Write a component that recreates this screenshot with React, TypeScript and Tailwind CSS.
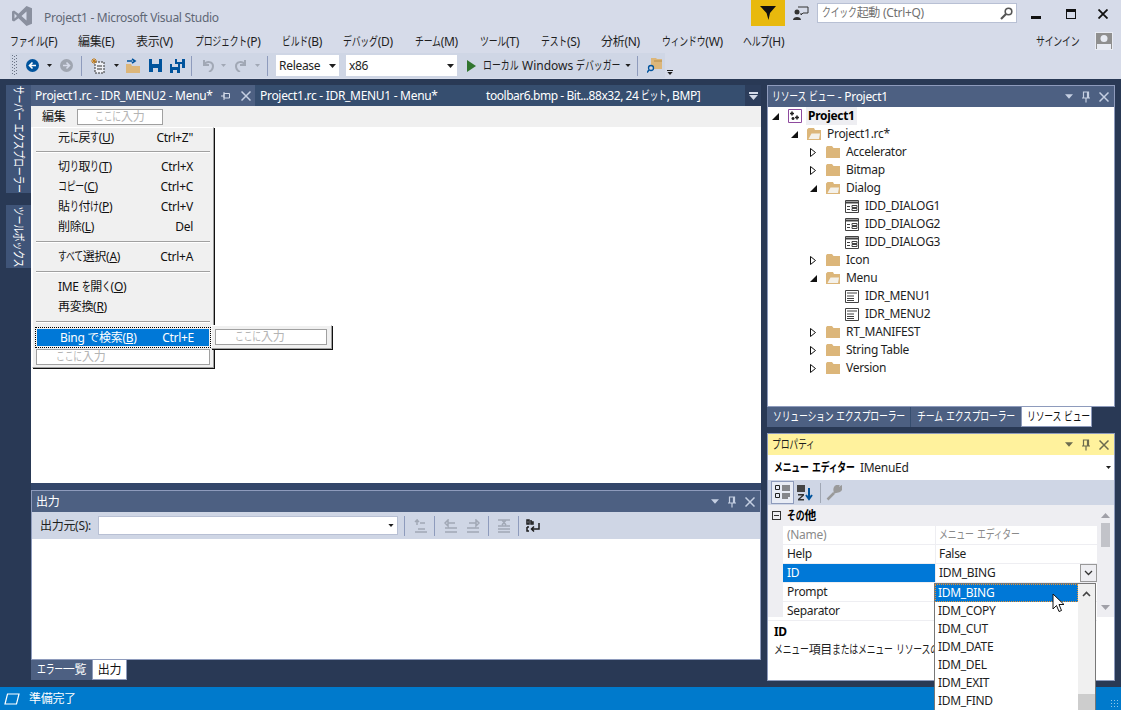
import React from "react";

const FONT = "font-['Noto_Sans','Noto_Sans_CJK_JP',sans-serif]";

function J({ t }: { t: string }) {
  const parts = t.split(/([\u3040-\u30ff]+)/);
  return (
    <>
      {parts.map((p, i) =>
        /^[\u3040-\u30ff]+$/.test(p) ? (
          <span
            key={i}
            className="inline-block origin-left scale-x-[0.74]"
            style={{ marginRight: -3.04 * p.length }}
          >
            {p}
          </span>
        ) : p === " " ? (
          <span key={i} className="inline-block w-[3px]">
            {" "}
          </span>
        ) : (
          <React.Fragment key={i}>{p}</React.Fragment>
        )
      )}
    </>
  );
}

function Arrow({ c = "#1e1e1e", w = 7, h = 4 }: { c?: string; w?: number; h?: number }) {
  return (
    <svg width={w} height={h} viewBox="0 0 7 4" className="shrink-0">
      <path d="M0 0H7L3.5 4Z" fill={c} />
    </svg>
  );
}

function Pin({ c }: { c: string }) {
  return (
    <svg width="10" height="12" viewBox="0 0 10 12" className="shrink-0">
      <path d="M2.5 1H7.5V7H2.5Z M1 7H9 M5 7V11.5 M6.5 1V7" fill="none" stroke={c} strokeWidth="1.2" />
    </svg>
  );
}

function X({ c, s = 10, w = 1.5 }: { c: string; s?: number; w?: number }) {
  return (
    <svg width={s} height={s} viewBox="0 0 10 10" className="shrink-0">
      <path d="M0.5 0.5L9.5 9.5M9.5 0.5L0.5 9.5" stroke={c} strokeWidth={w} />
    </svg>
  );
}

function Sep({ c = "#8e9bbc", h = 20 }: { c?: string; h?: number }) {
  return <div className="w-px shrink-0" style={{ height: h, backgroundColor: c }} />;
}

function ToolTitle({ title, active, icon }: { title: string; active?: boolean; icon?: string }) {
  const c = icon ?? "#c5cfe2";
  return (
    <div
      className={`flex h-[21px] shrink-0 items-center pl-[4px] pr-[5px] ${
        active ? "bg-[#fff29d] text-[#1e1e1e]" : "bg-[#4d6082] text-white"
      }`}
    >
      <span className="flex-1 truncate">
        <J t={title} />
      </span>
      <div className="flex items-center gap-[8px]">
        <Arrow c={c} w={8} h={5} />
        <Pin c={c} />
        <X c={c} />
      </div>
    </div>
  );
}

function TitleBar() {
  return (
    <div className="flex h-[30px] shrink-0 items-start">
      <svg width="20" height="20" viewBox="0 0 20 20" className="ml-[12px] mt-[6px] shrink-0">
        <path
          fillRule="evenodd"
          d="M14.5 0L20 2.2V17.8L14.5 20L6.5 12.2L2 15.5L0 14.5V5.5L2 4.5L6.5 7.8ZM14.5 5.5L9.5 10L14.5 14.5ZM2.5 7.5V12.5L5 10Z"
          fill="#8a909f"
        />
      </svg>
      <div className="ml-[12px] mt-[9px] text-[#5f6775] leading-[18px]">Project1 - Microsoft Visual Studio</div>
      <div className="flex-1" />
      <div className="flex h-[26px] w-[34px] items-center justify-center bg-[#e8b90d]">
        <svg width="16" height="14" viewBox="0 0 16 14">
          <path d="M0 0H16L10 7L8.5 14L6.5 7Z" fill="#111" />
        </svg>
      </div>
      <svg width="16" height="14" viewBox="0 0 16 14" className="ml-[8px] mt-[6px] shrink-0">
        <circle cx="4" cy="6" r="2.5" fill="#333" />
        <path d="M0 14C0 10 8 10 8 14Z" fill="#333" />
        <path d="M5 1H15V7H10L8 9V7" fill="none" stroke="#333" />
      </svg>
      <div className="ml-[8px] mt-[3px] flex h-[20px] w-[200px] items-center justify-between border border-[#b8c0d4] bg-white pl-[4px] pr-[3px] text-[#717171]">
        <span>
          <J t="クイック起動 (Ctrl+Q)" />
        </span>
        <svg width="13" height="13" viewBox="0 0 13 13">
          <circle cx="8.5" cy="4.5" r="3.3" fill="none" stroke="#555" strokeWidth="1.6" />
          <path d="M6 7L1 12" stroke="#555" strokeWidth="2.2" />
        </svg>
      </div>
      <div className="ml-[14px] mt-[16px] h-[2px] w-[10px] bg-[#111] shadow-[0_1px_0_#111]" />
      <div className="ml-[25px] mt-[9px] h-[10px] w-[10px] border border-t-[3px] border-[#111]" />
      <div className="ml-[22px] mt-[9px]">
        <X c="#111" s={10} w={1.8} />
      </div>
      <div className="w-[13px]" />
    </div>
  );
}

const MENUS: [string, number][] = [
  ["ファイル(F)", 68],
  ["編集(E)", 58],
  ["表示(V)", 59],
  ["プロジェクト(P)", 87],
  ["ビルド(B)", 61],
  ["デバッグ(D)", 72],
  ["チーム(M)", 65],
  ["ツール(T)", 61],
  ["テスト(S)", 60],
  ["分析(N)", 61],
  ["ウィンドウ(W)", 81],
  ["ヘルプ(H)", 293],
];

function MenuBar() {
  return (
    <div className="flex h-[22px] shrink-0 items-center pl-[10px] text-[#1e1e1e]">
      {MENUS.map(([m, w]) => (
        <div key={m} className="shrink-0 whitespace-nowrap pt-[1px]" style={{ width: w }}>
          <J t={m} />
        </div>
      ))}
      <div className="w-[59px] shrink-0 whitespace-nowrap pt-[1px]">
        <J t="サインイン" />
      </div>
      <div className="flex h-[18px] w-[18px] items-end justify-center border border-[#e8ebf3] bg-[#8f8f8f]">
        <svg width="14" height="15" viewBox="0 0 14 15">
          <circle cx="7" cy="4.5" r="3.5" fill="#e8ebf3" />
          <path d="M0 15V10H14V15Z" fill="#e8ebf3" />
        </svg>
      </div>
    </div>
  );
}

function Combo({ text, w }: { text: string; w: number }) {
  return (
    <div
      className="flex h-[21px] shrink-0 items-center justify-between bg-white pl-[3px] pr-[3px] text-[#1e1e1e]"
      style={{ width: w }}
    >
      <span>{text}</span>
      <Arrow />
    </div>
  );
}

function Grip() {
  const dots: React.ReactNode[] = [];
  for (let y = 0; y < 7; y++) {
    dots.push(<rect key={`a${y}`} x="0" y={y * 3} width="1" height="1" fill="#6a7486" />);
    dots.push(<rect key={`b${y}`} x="2" y={y * 3 + 1} width="1" height="1" fill="#6a7486" />);
    dots.push(<rect key={`c${y}`} x="4" y={y * 3} width="1" height="1" fill="#6a7486" />);
  }
  return (
    <svg width="5" height="21" viewBox="0 0 5 21" className="ml-[2px] shrink-0">
      {dots}
    </svg>
  );
}

function ToolBar() {
  return (
    <div className="flex h-[27px] shrink-0 items-center pl-[10px]">
      <div className="flex h-[25px] w-[655px] shrink-0 items-center bg-[#cfd6e5]">
        <Grip />
        <svg width="13" height="13" viewBox="0 0 13 13" className="ml-[9px] shrink-0">
          <circle cx="6.5" cy="6.5" r="6.5" fill="#00539c" />
          <path d="M10 6.5H4M6.5 3.5L3.5 6.5L6.5 9.5" stroke="#fff" strokeWidth="1.6" fill="none" />
        </svg>
        <div className="ml-[8px]">
          <Arrow w={5} h={3} />
        </div>
        <svg width="13" height="13" viewBox="0 0 13 13" className="ml-[8px] shrink-0">
          <circle cx="6.5" cy="6.5" r="6.5" fill="#9fa5b0" />
          <path d="M3 6.5H9M6.5 3.5L9.5 6.5L6.5 9.5" stroke="#d6dbe9" strokeWidth="1.6" fill="none" />
        </svg>
        <div className="ml-[8px]">
          <Sep h={20} />
        </div>
        <svg width="15" height="16" viewBox="0 0 15 16" className="ml-[9px] shrink-0">
          <path d="M4 4H13V15H4Z" fill="#eef0f6" stroke="#333" strokeDasharray="2 1" />
          <path d="M3 0V6M0 3H6M1 1L5 5M5 1L1 5" stroke="#c27d1a" strokeWidth="1" />
          <path d="M6 8H11M6 11H11" stroke="#333" />
        </svg>
        <div className="ml-[8px]">
          <Arrow w={5} h={3} />
        </div>
        <svg width="15" height="15" viewBox="0 0 15 15" className="ml-[7px] shrink-0">
          <path d="M0 6H5L6 8H14V15H0Z" fill="#dcb67a" />
          <path d="M1 3H6M6 1L9 3L6 5" stroke="#00539c" strokeWidth="1.6" fill="none" />
        </svg>
        <svg width="13" height="13" viewBox="0 0 13 13" className="ml-[8px] shrink-0">
          <path fillRule="evenodd" d="M0 0H13V13H0ZM3 0V5H10V0ZM4 9V13H9V9Z" fill="#00539c" />
        </svg>
        <svg width="15" height="14" viewBox="0 0 15 14" className="ml-[8px] shrink-0">
          <path fillRule="evenodd" d="M5 0H15V9H12V5H5ZM7 0V3H12V0Z" fill="#00539c" />
          <path fillRule="evenodd" d="M0 5H10V14H0ZM2 5V8H8V5ZM3 11V14H7V11Z" fill="#00539c" />
        </svg>
        <div className="ml-[6px]">
          <Sep h={20} />
        </div>
        <svg width="13" height="13" viewBox="0 0 13 13" className="ml-[9px] shrink-0">
          <path d="M3 1V6H8M3 6C6 1 12 3 12 7C12 10 10 12 8 13" stroke="#a1a8b5" strokeWidth="2" fill="none" />
        </svg>
        <div className="ml-[7px]">
          <Arrow c="#a1a8b5" w={5} h={3} />
        </div>
        <svg width="13" height="13" viewBox="0 0 13 13" className="ml-[9px] shrink-0">
          <path d="M10 1V6H5M10 6C7 1 1 3 1 7C1 10 3 12 5 13" stroke="#a1a8b5" strokeWidth="2" fill="none" />
        </svg>
        <div className="ml-[7px]">
          <Arrow c="#a1a8b5" w={5} h={3} />
        </div>
        <div className="ml-[7px]">
          <Sep h={20} />
        </div>
        <div className="ml-[8px]">
          <Combo text="Release" w={63} />
        </div>
        <div className="ml-[7px]">
          <Combo text="x86" w={111} />
        </div>
        <svg width="9" height="12" viewBox="0 0 9 12" className="ml-[10px] shrink-0">
          <path d="M0 0L9 6L0 12Z" fill="#31752f" />
        </svg>
        <span className="ml-[7px] w-[142px] shrink-0 whitespace-nowrap text-[#1e1e1e] tracking-normal">
          <J t="ローカル Windows デバッガー" />
        </span>
        <Arrow w={6} h={3} />
        <div className="ml-[6px]">
          <Sep h={20} />
        </div>
        <svg width="15" height="15" viewBox="0 0 15 15" className="ml-[9px] shrink-0">
          <path d="M4 0H9L10 1H15V11H4Z" fill="#dcb67a" />
          <path d="M7 2H15V4H7Z" fill="#c9a262" />
          <circle cx="4" cy="10" r="2.5" fill="#cfd6e5" stroke="#00539c" strokeWidth="1.3" />
          <path d="M2 12L0 14.5" stroke="#00539c" strokeWidth="1.5" />
        </svg>
      </div>
      <div className="ml-[1px] flex flex-col items-center gap-[1px] self-end pb-[4px] pl-[1px]">
        <div className="h-px w-[6px] bg-[#1e1e1e]" />
        <Arrow w={6} h={3} />
      </div>
    </div>
  );
}

function SideTab({ t, h }: { t: string; h: number }) {
  return (
    <div className="flex w-[25px] items-center justify-center bg-[#3f5478] text-white" style={{ height: h }}>
      <span className="rotate-90 whitespace-nowrap">
        <J t={t} />
      </span>
    </div>
  );
}

function Sidebar() {
  return (
    <div className="flex w-[31px] shrink-0 flex-col items-end gap-[12px]">
      <SideTab t="サーバー エクスプローラー" h={108} />
      <SideTab t="ツールボックス" h={63} />
    </div>
  );
}

function DocTabs() {
  return (
    <div className="flex h-[21px] shrink-0 items-center bg-[#364e6f] text-white">
      <div className="flex h-full w-[224px] shrink-0 items-center bg-[#4d6082] pl-[4px]">
        <span className="w-[186px] whitespace-nowrap">Project1.rc - IDR_MENU2 - Menu*</span>
        <svg width="10" height="8" viewBox="0 0 10 8" className="shrink-0">
          <path d="M3 1.5H8.5V6H3ZM3 0V8M0 4H3" fill="none" stroke="#d4dbe9" />
        </svg>
        <div className="ml-[10px]">
          <X c="#c5cfe2" />
        </div>
      </div>
      <span className="ml-[5px] w-[226px] shrink-0 whitespace-nowrap">Project1.rc - IDR_MENU1 - Menu*</span>
      <span className="w-[259px] shrink-0 whitespace-nowrap tracking-[-0.45px]">
        <J t="toolbar6.bmp - Bit...88x32, 24 ビット, BMP]" />
      </span>
      <div className="flex h-full flex-1 flex-col items-center justify-center gap-[1px] bg-[#2c3d5b]">
        <div className="h-[2px] w-[9px] bg-[#d4dbe9]" />
        <Arrow c="#d4dbe9" w={9} h={5} />
      </div>
    </div>
  );
}

function Row({ label, k, sc }: { label: string; k: string; sc: string }) {
  return (
    <div className="flex h-[20px] items-center pl-[25px] pr-[20px]">
      <span className="flex-1 whitespace-nowrap">
        <J t={label + "("} />
        <u>{k}</u>)
      </span>
      <span>{sc}</span>
    </div>
  );
}

function PopSep({ first }: { first?: boolean }) {
  return <div className={`mx-[3px] h-[2px] border-b border-white bg-[#a0a0a0] ${first ? "mb-[4px] mt-[3px]" : "my-[4px]"}`} />;
}

function Placeholder({ className }: { className: string }) {
  return (
    <div className={`flex h-[16px] items-center border border-[#a0a0a0] bg-white pl-[19px] text-[#b4b4b4] ${className}`}>
      <J t="ここに入力" />
    </div>
  );
}

function MenuPopup() {
  return (
    <div className="absolute left-[1px] top-[21px] w-[182px] border border-b-[#a0a0a0] border-l-white border-r-[#a0a0a0] border-t-white bg-[#f0f0f0] text-[#111] shadow-[1px_1px_0_#111]">
      <Row label="元に戻す" k="U" sc={'Ctrl+Z"'} />
      <PopSep first />
      <Row label="切り取り" k="T" sc="Ctrl+X" />
      <Row label="コピー" k="C" sc="Ctrl+C" />
      <Row label="貼り付け" k="P" sc="Ctrl+V" />
      <Row label="削除" k="L" sc="Del" />
      <PopSep />
      <Row label="すべて選択" k="A" sc="Ctrl+A" />
      <PopSep />
      <Row label="IME を開く" k="O" sc="" />
      <Row label="再変換" k="R" sc="" />
      <PopSep />
      <div className="relative mx-[2px] border border-dotted border-black p-px">
        <div className="flex h-[17px] items-center bg-[#0078d7] pl-[23px] pr-[15px] text-white">
          <span className="flex-1 whitespace-nowrap">
            Bing で検索(<u>B</u>)
          </span>
          <span>Ctrl+E</span>
        </div>
        <div className="absolute left-[175px] top-[-3px] w-[121px] border border-b-[#a0a0a0] border-l-white border-r-[#a0a0a0] border-t-white bg-[#f0f0f0] pb-[3px] pl-[3px] pr-[4px] pt-[3px] shadow-[1px_1px_0_#111]">
          <Placeholder className="w-full" />
        </div>
      </div>
      <div className="px-[3px] pb-[2px] pt-[1px]">
        <Placeholder className="w-full" />
      </div>
    </div>
  );
}

function DocContent() {
  return (
    <div className="relative h-[377px] shrink-0 bg-white">
      <div className="flex h-[21px] items-center bg-[#f0f0f0] pl-[11px] text-[#111]">
        <span className="w-[35px]">編集</span>
        <div className="flex h-[16px] w-[86px] items-center border border-[#a0a0a0] bg-white pl-[17px] text-[#b4b4b4]">
          <J t="ここに入力" />
        </div>
      </div>
      <MenuPopup />
    </div>
  );
}

function OutIcon({ d, off }: { d: string; off?: boolean }) {
  return (
    <svg width="14" height="14" viewBox="0 0 14 14" className="shrink-0">
      <path d={d} fill="none" stroke={off ? "#a1a8b5" : "#1e1e1e"} strokeWidth="1.5" />
    </svg>
  );
}

function Output() {
  return (
    <div className="flex h-[170px] shrink-0 flex-col border border-[#8e9bbc] border-b-[#8e9bbc] bg-white">
      <ToolTitle title="出力" />
      <div className="flex h-[27px] shrink-0 items-center bg-[#cfd6e5] pl-[8px] text-[#1e1e1e]">
        <span className="w-[58px] whitespace-nowrap">出力元(S):</span>
        <div className="flex h-[19px] w-[300px] shrink-0 items-center justify-end border border-[#b8c0d4] bg-white pr-[3px]">
          <Arrow w={6} h={3} />
        </div>
        <div className="ml-[6px]">
          <Sep h={20} />
        </div>
        <div className="ml-[9px]">
          <OutIcon off d="M1 13H13M4 10H11M3 6V1L1 3M3 1L5 3M6 4H11" />
        </div>
        <div className="ml-[6px]">
          <Sep h={20} />
        </div>
        <div className="ml-[9px]">
          <OutIcon off d="M1 13H13M1 9H13M1 4L4 1V7ZM4 4H11" />
        </div>
        <div className="ml-[8px]">
          <OutIcon off d="M1 13H13M1 9H13M13 4L10 1V7ZM3 4H10" />
        </div>
        <div className="ml-[8px]">
          <Sep h={20} />
        </div>
        <div className="ml-[8px]">
          <OutIcon off d="M1 13H13M1 10H13M1 1H13M1 7H13M5 1L9 6M9 1L5 6" />
        </div>
        <div className="ml-[7px]">
          <Sep h={20} />
        </div>
        <div className="ml-[7px]">
          <OutIcon d="M1 1H3V5H1ZM5 1V5H7V3H5M1 8H3M1 8V12H3M13 4V10H6M8 7.5L5.5 10L8 12.5" />
        </div>
      </div>
      <div className="flex-1" />
    </div>
  );
}

function BottomTabs() {
  return (
    <div className="flex h-[20px] shrink-0 text-white">
      <div className="flex w-[61px] items-center justify-center bg-[#4d6082]">
        <J t="エラー一覧" />
      </div>
      <div className="flex w-[35px] items-center justify-center border-x border-b border-[#8e9bbc] bg-white text-[#111]">
        出力
      </div>
    </div>
  );
}

function Exp({ s }: { s: "o" | "c" | "n" }) {
  if (s === "n") return <div className="w-[20px] shrink-0" />;
  return (
    <div className="flex w-[20px] shrink-0 justify-start pl-[4px]">
      {s === "o" ? (
        <svg width="7" height="7" viewBox="0 0 7 7">
          <path d="M7 0V7H0Z" fill="#111" />
        </svg>
      ) : (
        <svg width="6" height="9" viewBox="0 0 6 9">
          <path d="M0.5 0.5L5.5 4.5L0.5 8.5Z" fill="#fff" stroke="#111" />
        </svg>
      )}
    </div>
  );
}

function TreeIcon({ k }: { k: string }) {
  if (k === "proj")
    return (
      <svg width="14" height="14" viewBox="0 0 14 14" className="shrink-0">
        <path d="M0.5 0.5H13.5V13.5H0.5Z" fill="#fff" stroke="#8e4a9e" />
        <path d="M4 2.5V6.5M2 4.5H6M9 6.5V10.5M7 8.5H11M5 8V11M3.5 9.5H6.5" stroke="#222" strokeWidth="1.6" />
      </svg>
    );
  if (k === "closed")
    return (
      <svg width="14" height="12" viewBox="0 0 14 12" className="shrink-0">
        <path d="M0 1.5L1 0H6L7.5 2H14V12H0Z" fill="#dcb67a" />
      </svg>
    );
  if (k === "open")
    return (
      <svg width="15" height="12" viewBox="0 0 15 12" className="shrink-0">
        <path d="M0 12V1.5L1.5 0H7L8 2H14V12Z" fill="#dcb67a" />
        <path d="M1.5 11L4.5 5.5H13L12 11Z" fill="#f4f1ea" />
      </svg>
    );
  if (k === "dlg")
    return (
      <svg width="14" height="13" viewBox="0 0 14 13" className="shrink-0">
        <path d="M0.5 0.5H13.5V12.5H0.5Z" fill="#fff" stroke="#424242" />
        <path d="M0 1.5H14V3.5H0Z" fill="#424242" />
        <path d="M2 6.5H5M7 5.5H12V7.5H7ZM2 9.5H5M7 8.5H12V10.5H7Z" stroke="#424242" fill="none" />
      </svg>
    );
  return (
    <svg width="14" height="13" viewBox="0 0 14 13" className="shrink-0">
      <path d="M0.5 0.5H13.5V12.5H0.5Z" fill="#fff" stroke="#424242" />
      <path d="M2 3H12M2 6H9M2 8.5H9M2 10.5H9" stroke="#424242" />
    </svg>
  );
}

const TREE: [number, "o" | "c" | "n", string, string][] = [
  [0, "o", "proj", "Project1"],
  [1, "o", "open", "Project1.rc*"],
  [2, "c", "closed", "Accelerator"],
  [2, "c", "closed", "Bitmap"],
  [2, "o", "open", "Dialog"],
  [3, "n", "dlg", "IDD_DIALOG1"],
  [3, "n", "dlg", "IDD_DIALOG2"],
  [3, "n", "dlg", "IDD_DIALOG3"],
  [2, "c", "closed", "Icon"],
  [2, "o", "open", "Menu"],
  [3, "n", "menu", "IDR_MENU1"],
  [3, "n", "menu", "IDR_MENU2"],
  [2, "c", "closed", "RT_MANIFEST"],
  [2, "c", "closed", "String Table"],
  [2, "c", "closed", "Version"],
];

function Resource() {
  return (
    <div className="flex h-[322px] shrink-0 flex-col border border-[#8e9bbc] bg-white">
      <ToolTitle title="リソース ビュー - Project1" />
      <div className="flex flex-col text-[#1e1e1e]">
        {TREE.map(([l, e, i, t], n) => (
          <div key={n} className="flex h-[18px] items-center" style={{ paddingLeft: l * 19 }}>
            <Exp s={e} />
            <div className="flex w-[20px] shrink-0">
              <TreeIcon k={i} />
            </div>
            <span className={l === 0 ? "-ml-[2px] bg-[#eeeef2] px-[2px] font-bold leading-[18px] text-black" : ""}>{t}</span>
          </div>
        ))}
      </div>
    </div>
  );
}

function ResTabs() {
  return (
    <div className="flex h-[20px] shrink-0 text-white">
      <div className="flex w-[143px] items-center whitespace-nowrap bg-[#4d6082] pl-[6px]">
        <J t="ソリューション エクスプローラー" />
      </div>
      <div className="flex w-[111px] items-center whitespace-nowrap border-l border-[#364e6f] bg-[#4d6082] pl-[6px]">
        <J t="チーム エクスプローラー" />
      </div>
      <div className="flex w-[71px] items-center whitespace-nowrap border-x border-b border-[#8e9bbc] bg-white pl-[5px] text-[#111]">
        <J t="リソース ビュー" />
      </div>
    </div>
  );
}

function PropRow({ k, v, kc, vc, sel }: { k: string; v: string; kc?: string; vc?: string; sel?: boolean }) {
  return (
    <div className="flex h-[19px] border-b border-[#eeeef2] pl-[15px]">
      <div className={`flex w-[152px] shrink-0 items-center pl-[4px] ${sel ? "bg-[#0078d7] text-white" : kc ?? "bg-white text-[#1e1e1e]"}`}>
        {k}
      </div>
      <div className={`relative ml-px flex flex-1 items-center whitespace-nowrap bg-white pl-[3px] ${vc ?? "text-[#1e1e1e]"}`}>
        <span>
          <J t={v} />
        </span>
        {sel && (
          <div className="absolute right-0 top-0 flex h-[18px] w-[17px] items-center justify-center border border-[#999] bg-[#eeeef2]">
            <svg width="9" height="6" viewBox="0 0 9 6">
              <path d="M1 1L4.5 4.5L8 1" fill="none" stroke="#333" strokeWidth="1.3" />
            </svg>
          </div>
        )}
      </div>
    </div>
  );
}

const DROP = ["IDM_COPY", "IDM_CUT", "IDM_DATE", "IDM_DEL", "IDM_EXIT", "IDM_FIND"];

function Dropdown() {
  return (
    <div className="absolute left-[166px] top-[149px] z-10 flex h-[135px] w-[162px] border border-[#777] bg-white text-[#1e1e1e]">
      <div className="flex-1">
        <div className="flex h-[18px] items-center border border-dotted border-[#e8902c] bg-[#0078d7] pl-[2px] text-white">IDM_BING</div>
        {DROP.map((d) => (
          <div key={d} className="flex h-[18px] items-center pl-[3px]">
            {d}
          </div>
        ))}
      </div>
      <div className="flex w-[17px] shrink-0 flex-col items-center bg-[#f0f0f0] pt-[7px]">
        <svg width="9" height="6" viewBox="0 0 9 6">
          <path d="M1 5L4.5 1.5L8 5" fill="none" stroke="#444" strokeWidth="1.6" />
        </svg>
        <div className="flex-1" />
        <div className="h-[23px] w-full bg-[#cdcdcd]" />
      </div>
      <svg width="13" height="20" viewBox="0 0 13 20" className="absolute left-[117px] top-[9px]">
        <path d="M1 1V16L4.5 12.5L7 18.5L9.5 17.5L7 11.5H12Z" fill="#fff" stroke="#111" />
      </svg>
    </div>
  );
}

function Properties() {
  return (
    <div className="relative flex h-[248px] shrink-0 flex-col border border-[#8e9bbc] bg-white">
      <ToolTitle title="プロパティ" active icon="#6b6b4f" />
      <div className="flex h-[25px] shrink-0 items-center pl-[6px] pr-[3px] text-[#1e1e1e]">
        <span className="w-[86px] whitespace-nowrap font-bold text-black">
          <J t="メニュー エディター" />
        </span>
        <span className="flex-1">IMenuEd</span>
        <Arrow w={5} h={3} />
      </div>
      <div className="flex h-[25px] shrink-0 items-center bg-[#cfd6e5] pl-[3px]">
        <div className="flex h-[23px] w-[23px] items-center justify-center border border-[#8e9bbc] bg-[#e8ecf5]">
          <svg width="15" height="15" viewBox="0 0 15 15">
            <path d="M0.5 0.5H4.5V4.5H0.5ZM0.5 8.5H4.5V12.5H0.5ZM7 1H15M7 3H15M7 5H15M7 9H15M7 11H15M7 13H13" fill="none" stroke="#222" />
          </svg>
        </div>
        <svg width="16" height="16" viewBox="0 0 16 16" className="ml-[3px] shrink-0">
          <path d="M0 0H8V7H0Z" fill="#444" />
          <path d="M1 9H7V10.5L3 14H7V15.5H1V14L5 10.5H1Z" fill="#333" />
          <path d="M12 3V13M9 10L12 14L15 10" stroke="#00539c" strokeWidth="2" fill="none" />
        </svg>
        <div className="ml-[7px]">
          <Sep h={20} c="#a1a8b5" />
        </div>
        <svg width="16" height="16" viewBox="0 0 16 16" className="ml-[5px] shrink-0">
          <path d="M1.5 14.5L8 8M12 1C9 1 8 4 9 7L13 6C16 5 15 2 15 2L12 4.5L11 3.5Z" stroke="#9a9a9a" strokeWidth="2.5" fill="#9a9a9a" />
        </svg>
      </div>
      <div className="flex h-[112px] shrink-0 bg-[#eeeef2]">
        <div className="flex-1">
          <div className="flex h-[21px] items-center pl-[4px] font-bold text-black">
            <div className="flex h-[9px] w-[9px] items-center justify-center border border-[#333]">
              <div className="h-px w-[5px] bg-[#333]" />
            </div>
            <span className="ml-[6px] whitespace-nowrap">
              <J t="その他" />
            </span>
          </div>
          <PropRow k="(Name)" v="メニュー エディター" kc="bg-white text-[#8a8a8a]" vc="text-[#8a8a8a]" />
          <PropRow k="Help" v="False" />
          <PropRow k="ID" v="IDM_BING" sel />
          <PropRow k="Prompt" v="" />
          <PropRow k="Separator" v="" />
        </div>
        <div className="flex w-[17px] shrink-0 flex-col items-center bg-[#eeeef2]">
          <svg width="9" height="5" viewBox="0 0 9 5" className="mt-[8px]">
            <path d="M4.5 0L9 5H0Z" fill="#a0a0a8" />
          </svg>
          <div className="mt-[5px] h-[24px] w-[9px] bg-[#c2c3c9]" />
          <div className="flex-1" />
          <svg width="9" height="5" viewBox="0 0 9 5" className="mb-[7px]">
            <path d="M0 0H9L4.5 5Z" fill="#a0a0a8" />
          </svg>
        </div>
      </div>
      <div className="flex-1 overflow-hidden whitespace-nowrap pl-[6px] pt-[7px] text-[#1e1e1e]">
        <div className="h-[18px] font-bold text-black">ID</div>
        <div className="h-[18px]">
          <J t="メニュー項目またはメニュー リソースの" />
        </div>
      </div>
      <Dropdown />
    </div>
  );
}

function StatusBar() {
  return (
    <div className="flex h-[23px] shrink-0 items-center bg-[#007acc] pl-[4px] text-white">
      <svg width="16" height="12" viewBox="0 0 16 12" className="shrink-0">
        <path d="M3.5 1H15L12.5 11H1Z" fill="none" stroke="#fff" strokeWidth="1.2" />
      </svg>
      <span className="ml-[9px]">準備完了</span>
      <div className="flex-1" />
      <div className="mb-[-10px] mr-[1px] h-[10px] w-[10px] bg-[radial-gradient(#8fc7ea_1px,transparent_1px)] bg-[length:3px_3px]" />
    </div>
  );
}

export default function App() {
  return (
    <div className={`relative flex h-[710px] w-[1121px] flex-col overflow-hidden bg-[#d6dbe9] text-[12px] leading-[16px] tracking-[-0.3px] ${FONT}`}>
      <TitleBar />
      <MenuBar />
      <ToolBar />
      <div className="flex min-h-0 flex-1 bg-[#293955] pt-[6px]">
        <Sidebar />
        <div className="flex w-[730px] shrink-0 flex-col">
          <DocTabs />
          <DocContent />
          <div className="h-[7px] shrink-0 bg-[#33466a]" />
          <Output />
          <BottomTabs />
        </div>
        <div className="w-[6px] shrink-0" />
        <div className="flex w-[348px] shrink-0 flex-col">
          <Resource />
          <ResTabs />
          <div className="h-[6px] shrink-0" />
          <Properties />
        </div>
      </div>
      <StatusBar />
    </div>
  );
}
